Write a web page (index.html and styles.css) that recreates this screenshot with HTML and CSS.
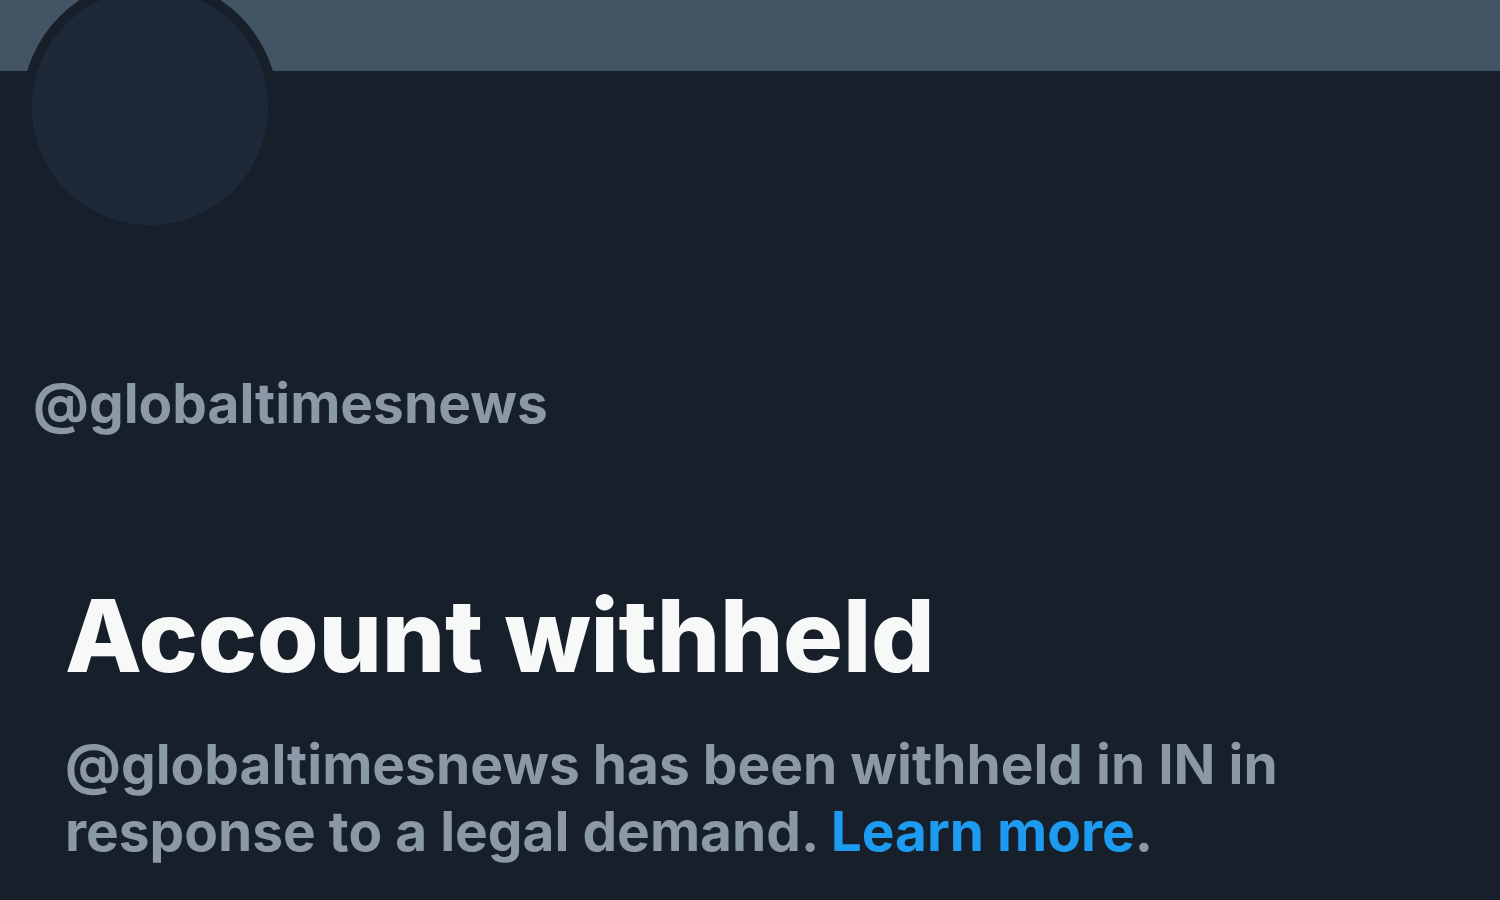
FILE: index.html
```html
<!DOCTYPE html>
<html>
<head>
<meta charset="utf-8">
<link rel="stylesheet" href="styles.css">
</head>
<body>
<div class="page">
  <div class="banner"></div>
  <div class="profile">
    <div class="avatar"><div class="avatar-inner"></div></div>
    <div class="handle">@globaltimesnews</div>
    <div class="notice">
      <h1 class="title">Account withheld</h1>
      <p class="desc">@globaltimesnews has been withheld in IN in response to a legal demand. <a class="link" href="#">Learn more</a>.</p>
    </div>
  </div>
</div>
</body>
</html>
```

FILE: styles.css
```css
html, body {
  margin: 0;
  padding: 0;
  background: #17202a;
}
.page {
  width: 1500px;
  height: 900px;
  overflow: hidden;
  background: #17202a;
  font-family: Inter, "Liberation Sans", sans-serif;
}
.banner {
  height: 71px;
  background: #435464;
}
.profile {
  position: relative;
  padding: 0 0 0 33px;
}
.avatar {
  position: absolute;
  left: 22px;
  top: -92px;
  width: 256px;
  height: 256px;
  border-radius: 50%;
  background: #17202a;
  display: flex;
  align-items: center;
  justify-content: center;
}
.avatar-inner {
  width: 236px;
  height: 236px;
  border-radius: 50%;
  background: #1d2939;
}
.handle {
  padding-top: 302px;
  font-size: 55px;
  line-height: 60px;
  font-weight: 700;
  color: #8b98a5;
}
.notice {
  padding: 148px 0 0 32px;
}
.title {
  margin: 0;
  font-size: 100px;
  line-height: 110px;
  font-weight: 800;
  letter-spacing: -0.3px;
  color: #f7f9f9;
}
.desc {
  margin: 40px 0 0;
  width: 1300px;
  font-size: 55px;
  line-height: 67px;
  font-weight: 700;
  color: #8b98a5;
}
.link {
  color: #1d9bf0;
  text-decoration: none;
}
```
